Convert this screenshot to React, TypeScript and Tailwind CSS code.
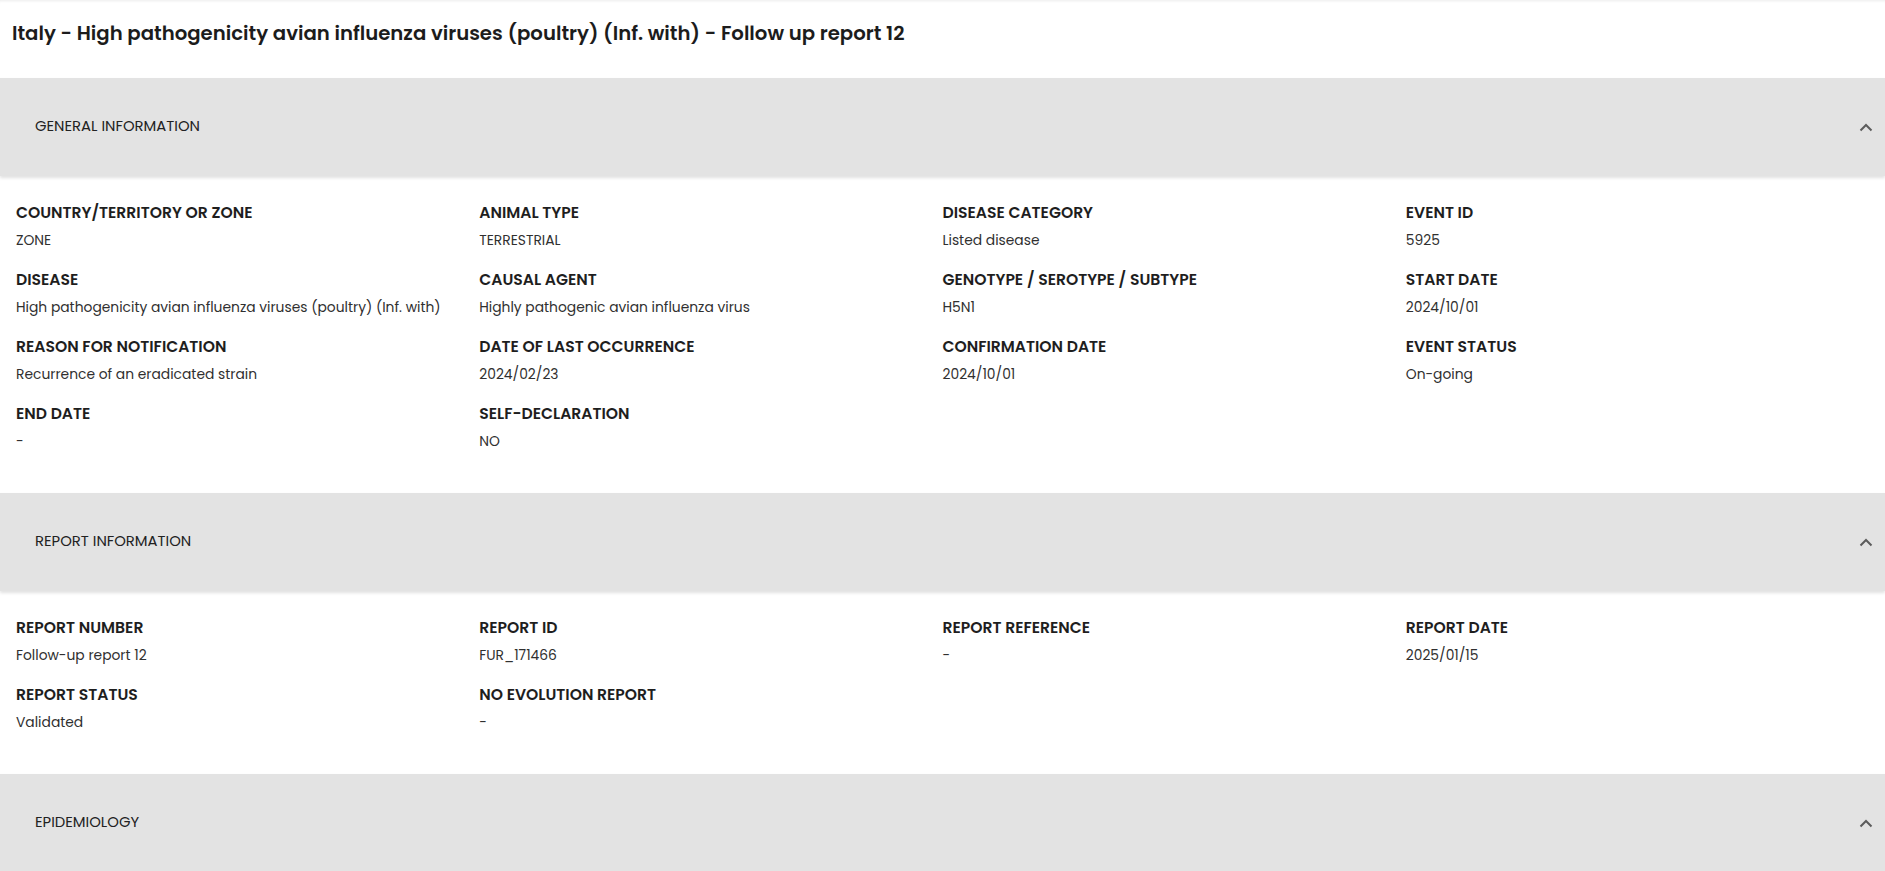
import React from "react";

type Field = { label: string; value: string };

const general: Field[] = [
  { label: "COUNTRY/TERRITORY OR ZONE", value: "ZONE" },
  { label: "ANIMAL TYPE", value: "TERRESTRIAL" },
  { label: "DISEASE CATEGORY", value: "Listed disease" },
  { label: "EVENT ID", value: "5925" },
  { label: "DISEASE", value: "High pathogenicity avian influenza viruses (poultry) (Inf. with)" },
  { label: "CAUSAL AGENT", value: "Highly pathogenic avian influenza virus" },
  { label: "GENOTYPE / SEROTYPE / SUBTYPE", value: "H5N1" },
  { label: "START DATE", value: "2024/10/01" },
  { label: "REASON FOR NOTIFICATION", value: "Recurrence of an eradicated strain" },
  { label: "DATE OF LAST OCCURRENCE", value: "2024/02/23" },
  { label: "CONFIRMATION DATE", value: "2024/10/01" },
  { label: "EVENT STATUS", value: "On-going" },
  { label: "END DATE", value: "-" },
  { label: "SELF-DECLARATION", value: "NO" },
];

const report: Field[] = [
  { label: "REPORT NUMBER", value: "Follow-up report 12" },
  { label: "REPORT ID", value: "FUR_171466" },
  { label: "REPORT REFERENCE", value: "-" },
  { label: "REPORT DATE", value: "2025/01/15" },
  { label: "REPORT STATUS", value: "Validated" },
  { label: "NO EVOLUTION REPORT", value: "-" },
];

function Chevron() {
  return (
    <svg width="14" height="9" viewBox="0 0 14 9" fill="none">
      <path d="M1.5 7.5L7 2l5.5 5.5" stroke="#5c5c5c" strokeWidth="2" />
    </svg>
  );
}

function Bar({ title }: { title: string }) {
  return (
    <div className="relative z-10 flex h-[98px] items-center justify-between bg-[#e3e3e3] pl-[35px] pr-[12px] shadow-[0_2px_3px_rgba(0,0,0,0.12)]">
      <span className="pb-[2px] text-[14.8px] leading-[20px] text-[#222]">{title}</span>
      <Chevron />
    </div>
  );
}

function Grid({ fields }: { fields: Field[] }) {
  return (
    <div className="grid grid-cols-4 gap-y-[18px] px-4 pt-[26px] pb-[41px]">
      {fields.map((f) => (
        <div key={f.label} className="flex flex-col">
          <div className="text-[15.6px] font-semibold leading-[22px] text-[#1e1e1e]">{f.label}</div>
          <div className="mt-[5px] text-[13.85px] leading-[22px] text-[#303030]">{f.value}</div>
        </div>
      ))}
    </div>
  );
}

export default function App() {
  return (
    <div
      className="min-h-[871px] bg-white"
      style={{ fontFamily: '"Poppins", "Inter", "Open Sans", sans-serif' }}
    >
      <div className="h-[78px] px-3 pt-[19px] shadow-[inset_0_3px_3px_-2px_rgba(0,0,0,0.08)]">
        <h1 className="text-[19.7px] font-semibold leading-[28px] text-[#1c1c1c]">
          Italy - High pathogenicity avian influenza viruses (poultry) (Inf. with) - Follow up report 12
        </h1>
      </div>
      <Bar title="GENERAL INFORMATION" />
      <Grid fields={general} />
      <Bar title="REPORT INFORMATION" />
      <Grid fields={report} />
      <Bar title="EPIDEMIOLOGY" />
    </div>
  );
}
